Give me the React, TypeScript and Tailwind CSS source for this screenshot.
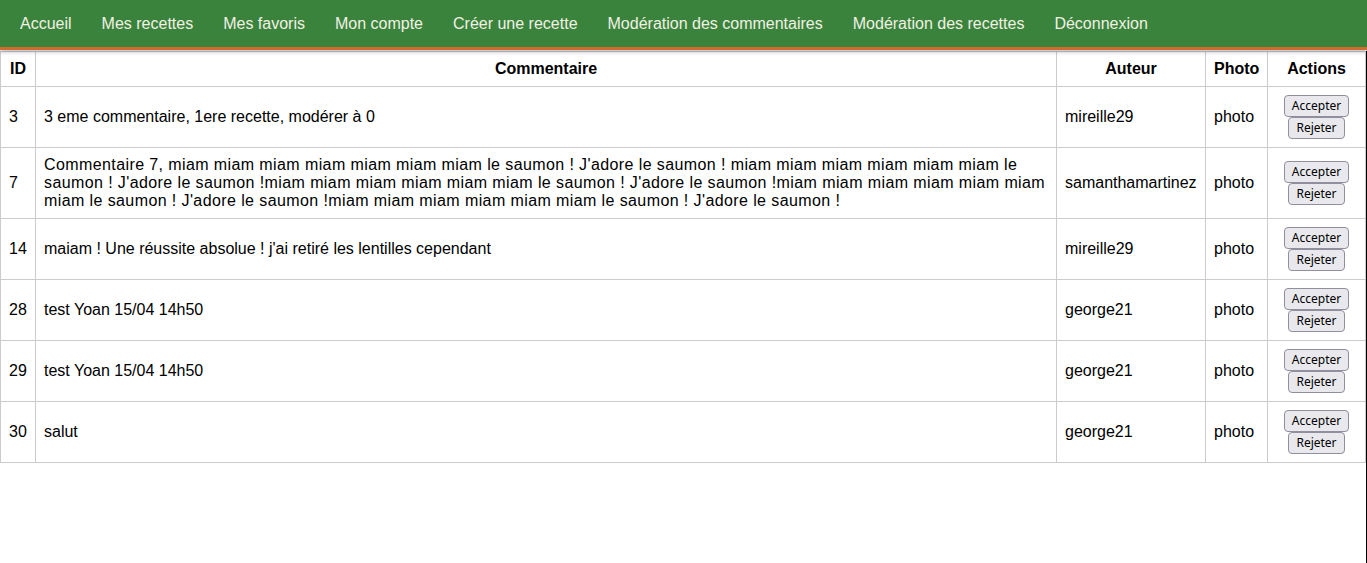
import React from 'react';

interface Comment {
  id: number;
  lines: string[];
  author: string;
}

const links = [
  'Accueil',
  'Mes recettes',
  'Mes favoris',
  'Mon compte',
  'Créer une recette',
  'Modération des commentaires',
  'Modération des recettes',
  'Déconnexion',
];

// le commentaire 7 est coupé comme dans la capture
const comments: Comment[] = [
  { id: 3, lines: ['3 eme commentaire, 1ere recette, modérer à 0'], author: 'mireille29' },
  {
    id: 7,
    lines: [
      "Commentaire 7, miam miam miam miam miam miam miam le saumon ! J'adore le saumon ! miam miam miam miam miam miam le",
      "saumon ! J'adore le saumon !miam miam miam miam miam miam le saumon ! J'adore le saumon !miam miam miam miam miam miam",
      "miam le saumon ! J'adore le saumon !miam miam miam miam miam miam le saumon ! J'adore le saumon !",
    ],
    author: 'samanthamartinez',
  },
  { id: 14, lines: ["maiam ! Une réussite absolue ! j'ai retiré les lentilles cependant"], author: 'mireille29' },
  { id: 28, lines: ['test Yoan 15/04 14h50'], author: 'george21' },
  { id: 29, lines: ['test Yoan 15/04 14h50'], author: 'george21' },
  { id: 30, lines: ['salut'], author: 'george21' },
];

const cell = 'border border-[#cccccc] px-2 py-2 align-middle';
const btn =
  "block mx-auto bg-[#e9e9ed] border border-[#8f8f9d] rounded-[4px] px-[7px] py-[1px] text-[12px] leading-[18px] text-black font-['Noto_Sans',sans-serif]";

const App: React.FC = () => {
  return (
    <div className="min-h-screen bg-white font-['Liberation_Sans',Arial,sans-serif] text-[16px] text-black">
      <nav className="relative z-10 flex bg-[#3a833c] border-b-[3px] border-[#d2692e] px-[5px] shadow-[0_2px_4px_rgba(0,0,0,0.25)]">
        {links.map(l => (
          <a key={l} href="#" className="block px-[15px] pt-[15px] pb-[14px] leading-[18px] text-[#f2f0e4]">
            {l}
          </a>
        ))}
      </nav>

      <div className="min-h-[513px] border-r border-black">
        <table className="w-full table-fixed mt-[1px] border-collapse leading-[18px]">
          <thead>
            <tr>
              <th className={`${cell} w-[35px]`}>ID</th>
              <th className={cell}>Commentaire</th>
              <th className={`${cell} w-[149px]`}>Auteur</th>
              <th className={`${cell} w-[62px]`}>Photo</th>
              <th className={`${cell} w-[98px]`}>Actions</th>
            </tr>
          </thead>
          <tbody>
            {comments.map(c => (
              <tr key={c.id}>
                <td className={cell}>{c.id}</td>
                <td className={`${cell} ${c.lines.length > 1 ? 'tracking-[0.4px]' : ''}`}>
                  {c.lines.map((line, i) => (
                    <React.Fragment key={i}>
                      {i > 0 && <br />}
                      {line}
                    </React.Fragment>
                  ))}
                </td>
                <td className={cell}>{c.author}</td>
                <td className={cell}>photo</td>
                <td className={`${cell} text-center`}>
                  <button className={btn}>Accepter</button>
                  <button className={btn}>Rejeter</button>
                </td>
              </tr>
            ))}
          </tbody>
        </table>
      </div>
    </div>
  );
};

export default App;
